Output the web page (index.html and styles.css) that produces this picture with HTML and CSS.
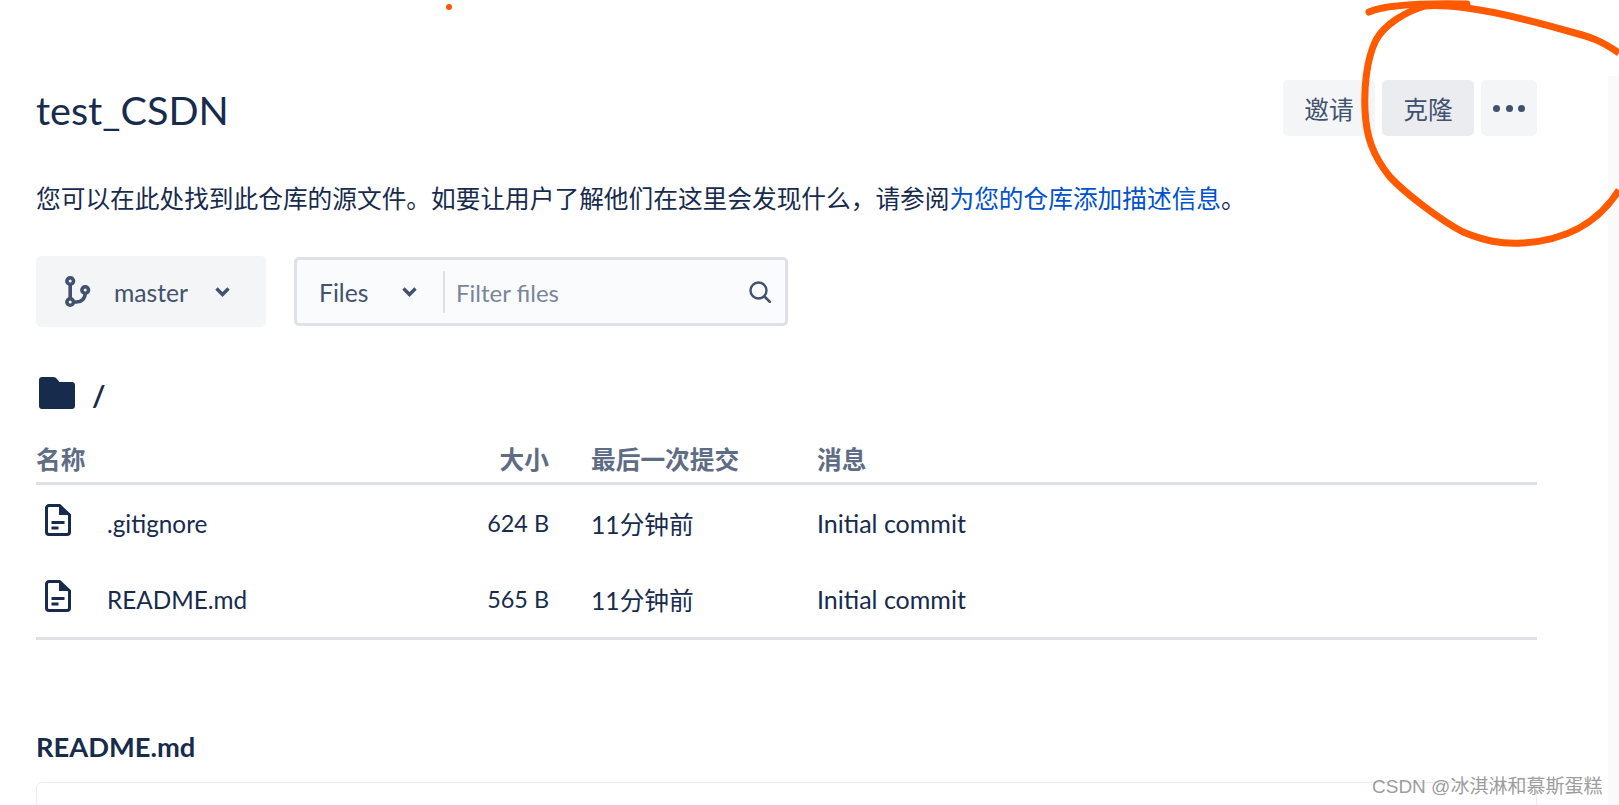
FILE: index.html
```html
<!DOCTYPE html>
<html lang="zh-CN">
<head>
<meta charset="utf-8">
<title>test_CSDN</title>
<link rel="stylesheet" href="styles.css">
</head>
<body>
<main class="page">
  <header class="head">
    <h1 class="title">test_CSDN</h1>
    <div class="actions">
      <button class="btn wide">邀请</button>
      <button class="btn wide active">克隆</button>
      <button class="btn more" aria-label="更多"><span class="dot"></span><span class="dot"></span><span class="dot"></span></button>
    </div>
  </header>
  <p class="desc">您可以在此处找到此仓库的源文件。如要让用户了解他们在这里会发现什么，请参阅<a class="link" href="#">为您的仓库添加描述信息</a>。</p>
  <div class="toolbar">
    <button class="branch">
      <svg class="branch-icon" viewBox="0 0 26 33" width="26" height="33"><g fill="none" stroke="#42526e" stroke-width="3.600"><circle cx="5.200" cy="6" r="3.300"/><circle cx="5.200" cy="27" r="3.300"/><circle cx="20.200" cy="15" r="3.300"/><path d="M5.200 9.300V23.700M8.500 27h3c5 0 8.700-3.500 8.700-8.700"/></g></svg>
      <span class="branch-name">master</span>
      <svg class="chev" viewBox="0 0 15 10" width="15" height="10"><path d="M1.500 1.500 7.500 7.500 13.500 1.500" fill="none" stroke="#42526e" stroke-width="3.400"/></svg>
    </button>
    <div class="filter">
      <span class="filter-type"><span class="filter-label">Files</span><svg class="chev" viewBox="0 0 15 10" width="15" height="10"><path d="M1.500 1.500 7.500 7.500 13.500 1.500" fill="none" stroke="#42526e" stroke-width="3.400"/></svg></span>
      <span class="filter-input">Filter files</span>
      <svg class="search" viewBox="0 0 22 22" width="22" height="22"><circle cx="9.500" cy="9.500" r="8" fill="none" stroke="#42526e" stroke-width="2.400"/><path d="M15.500 15.500 20.800 20.800" stroke="#42526e" stroke-width="2.600" stroke-linecap="round"/></svg>
    </div>
  </div>
  <div class="crumb">
    <svg viewBox="0 0 36 32" width="36" height="32"><path d="M3 0h11c2 0 3 .8 4 2l2.500 3H33c1.700 0 3 1.300 3 3v21c0 1.700-1.300 3-3 3H3c-1.700 0-3-1.300-3-3V3c0-1.700 1.300-3 3-3z" fill="#172b4d"/></svg>
    <span class="slash">/</span>
  </div>
  <section class="files">
    <div class="row header"><span>名称</span><span class="size">大小</span><span class="when">最后一次提交</span><span>消息</span></div>
    <div class="row">
      <span class="name"><svg class="file" viewBox="0 0 26 32" width="26" height="32"><path d="M4 1.500h10.500L24.500 11v17c0 1.400-1.100 2.500-2.500 2.500H4A2.500 2.500 0 0 1 1.500 28V4A2.500 2.500 0 0 1 4 1.500z" fill="none" stroke="#172b4d" stroke-width="3"/><path d="M14 1v10h11z" fill="#172b4d"/><path d="M6.500 17h13v3h-13zM6.500 22.500h7v3h-7z" fill="#172b4d"/></svg><span class="latin">.gitignore</span></span>
      <span class="size bytes">624 B</span><span class="when">11分钟前</span><span class="msg">Initial commit</span>
    </div>
    <div class="row">
      <span class="name"><svg class="file" viewBox="0 0 26 32" width="26" height="32"><path d="M4 1.500h10.500L24.500 11v17c0 1.400-1.100 2.500-2.500 2.500H4A2.500 2.500 0 0 1 1.500 28V4A2.500 2.500 0 0 1 4 1.500z" fill="none" stroke="#172b4d" stroke-width="3"/><path d="M14 1v10h11z" fill="#172b4d"/><path d="M6.500 17h13v3h-13zM6.500 22.500h7v3h-7z" fill="#172b4d"/></svg><span class="latin">README.md</span></span>
      <span class="size bytes">565 B</span><span class="when">11分钟前</span><span class="msg">Initial commit</span>
    </div>
  </section>
  <h2 class="readme-title">README.md</h2>
  <div class="readme-box"></div>
</main>
<div class="scroll-track"></div>
<svg class="ink" viewBox="0 0 1619 805" width="1619" height="805">
  <circle cx="449" cy="7" r="3" fill="#ff5500"/>
  <path d="M1369 12C1385 5 1420 3 1467 4" fill="none" stroke="#ff5a00" stroke-width="7" stroke-linecap="round"/>
  <path d="M1619 53C1600 40 1590 37 1575 33C1530 20 1490 11 1467 8C1450 6 1435 5 1425 6C1405 12 1385 24 1376 40C1366 60 1364 90 1365 110C1366 135 1372 155 1390 177C1405 193 1440 220 1463 232C1485 241 1500 244 1522 243C1560 241 1595 228 1619 190" fill="none" stroke="#ff5a00" stroke-width="7"/>
</svg>
<div class="watermark">CSDN @冰淇淋和慕斯蛋糕</div>
</body>
</html>
```

FILE: styles.css
```css
html, body {
  margin: 0;
  height: 805px;
  overflow: hidden;
  background: #fff;
}
body {
  font-family: "Lato", "Noto Sans CJK SC", sans-serif;
  font-size: 24.7px;
  color: #172b4d;
}
.page {
  width: 1501px;
  padding: 80px 0 0 36px;
}
.head {
  display: flex;
  justify-content: space-between;
  align-items: center;
  height: 56px;
}
.title {
  margin: 0;
  padding-top: 2px;
  font-size: 39.6px;
  font-weight: 400;
}
.actions {
  display: flex;
  gap: 7px;
}
.btn {
  display: flex;
  align-items: center;
  justify-content: center;
  height: 56px;
  border: 0;
  border-radius: 5px;
  background: #f4f5f7;
  color: #42526e;
  font: inherit;
}
.btn.wide { width: 92px; }
.btn.active { background: #ebecf0; }
.btn.more { width: 56px; gap: 5.3px; }
.dot {
  width: 7px;
  height: 7px;
  border-radius: 50%;
  background: #42526e;
}
.desc {
  margin: 46px 0 0;
  line-height: 34px;
  height: 34px;
}
.link {
  color: #0052cc;
  text-decoration: none;
}
.toolbar {
  display: flex;
  gap: 28px;
  margin-top: 40px;
  height: 71px;
}
.branch {
  display: flex;
  align-items: center;
  width: 230px;
  padding: 0 0 0 29px;
  border: 0;
  border-radius: 5px;
  background: #f4f5f7;
  color: #42526e;
  font: inherit;
}
.branch-name {
  margin: 2px 27px 0 23px;
}
.filter {
  display: flex;
  align-items: center;
  width: 494px;
  height: 69px;
  margin-top: 1px;
  box-sizing: border-box;
  border: 3px solid #dfe1e6;
  border-radius: 5px;
  background: #fafbfc;
  color: #42526e;
}
.filter-type {
  display: flex;
  align-items: center;
  justify-content: space-between;
  box-sizing: border-box;
  width: 148px;
  height: 42px;
  padding: 0 26px 0 22px;
  border-right: 2px solid #dfe1e6;
}
.filter-label { padding-top: 2px; }
.filter-input {
  flex: 1;
  padding: 2px 0 0 11px;
  font-size: 24px;
  color: #7a869a;
}
.search { margin-right: 14px; }
.crumb {
  display: flex;
  align-items: center;
  gap: 17px;
  margin: 50px 0 0 3px;
  height: 32px;
}
.slash {
  font-size: 29px;
  font-weight: 700;
  padding-top: 3px;
}
.files {
  margin-top: 25px;
  border-bottom: 3px solid #dfe1e6;
}
.row {
  display: grid;
  grid-template-columns: 370px 143px 268px 1fr;
  align-items: center;
  height: 76px;
}
.row.header {
  height: 48px;
  border-bottom: 3px solid #dfe1e6;
  color: #5e6c84;
  font-weight: 700;
}
.size { text-align: right; }
.bytes { font-size: 23.4px; }
.when { padding-left: 42px; }
.msg { font-size: 25px; }
.name {
  display: flex;
  align-items: center;
  gap: 36px;
  padding-left: 9px;
}
.latin { font-size: 24.3px; }
.file { margin-top: -6px; }
.readme-title {
  margin: 88px 0 0;
  font-size: 27.3px;
  line-height: 38px;
  font-weight: 700;
}
.readme-box {
  height: 100px;
  margin-top: 16px;
  border: 1px solid #ebecf0;
  border-radius: 6px;
}
.scroll-track {
  position: absolute;
  top: 76px;
  right: 0;
  bottom: 0;
  width: 11px;
  background: #fafafa;
}
.ink {
  position: absolute;
  top: 0;
  left: 0;
  pointer-events: none;
}
.watermark {
  position: absolute;
  top: 774px;
  left: 1372px;
  font-family: "Liberation Sans", "Noto Sans CJK SC", sans-serif;
  font-size: 19px;
  line-height: 26px;
  white-space: nowrap;
  color: rgba(130, 130, 130, 0.8);
}
```
